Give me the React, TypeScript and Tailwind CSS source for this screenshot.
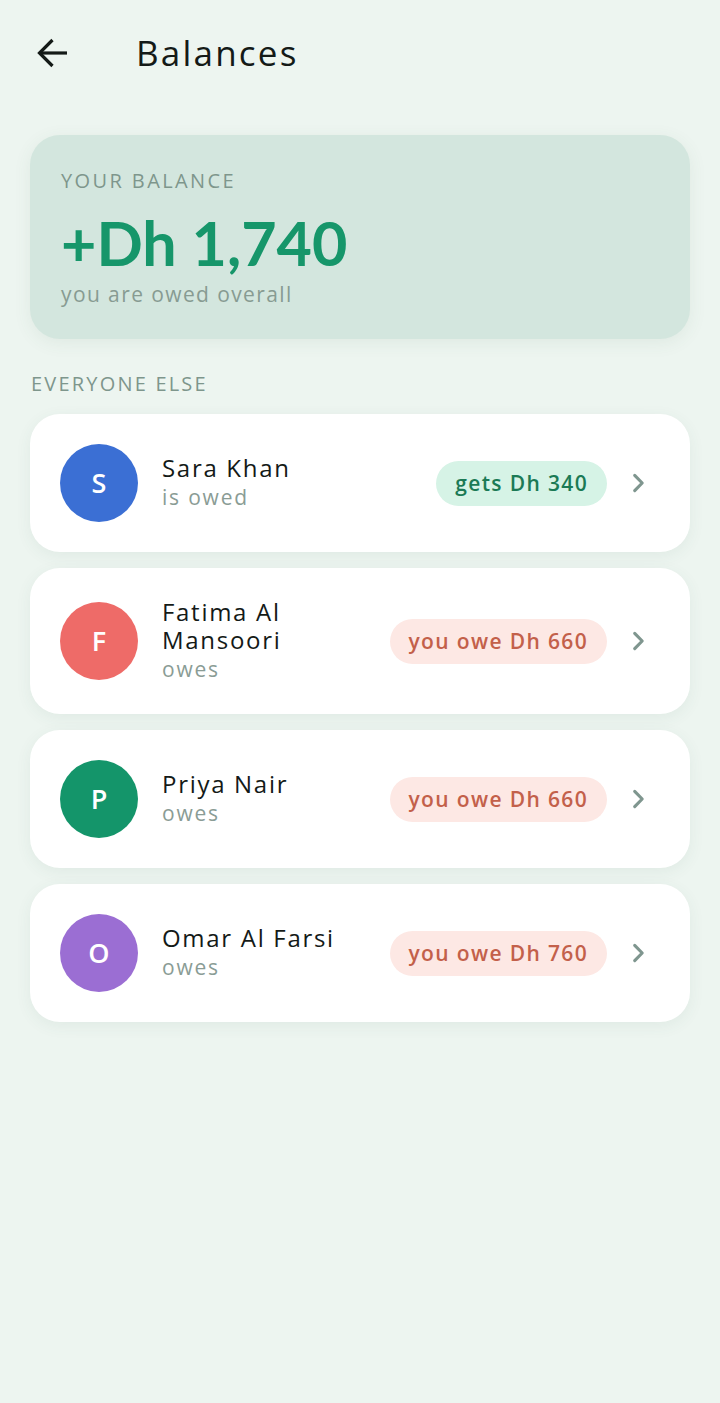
import React from "react";

type Person = {
  initial: string;
  name: string;
  sub: string;
  amount: string;
  color: string;
  positive: boolean;
};

const people: Person[] = [
  { initial: "S", name: "Sara Khan", sub: "is owed", amount: "gets Dh 340", color: "bg-[#3b6fd4]", positive: true },
  { initial: "F", name: "Fatima Al Mansoori", sub: "owes", amount: "you owe Dh 660", color: "bg-[#ee6b68]", positive: false },
  { initial: "P", name: "Priya Nair", sub: "owes", amount: "you owe Dh 660", color: "bg-[#14956a]", positive: false },
  { initial: "O", name: "Omar Al Farsi", sub: "owes", amount: "you owe Dh 760", color: "bg-[#9b6ed3]", positive: false },
];

function Chevron() {
  return (
    <svg width="24" height="24" viewBox="0 0 24 24" fill="none" stroke="#7f968f" strokeWidth="3.1" strokeLinecap="round" strokeLinejoin="round">
      <path d="M8.7 4.3L16.2 12L8.7 19.7" />
    </svg>
  );
}

export default function App() {
  return (
    <div className="min-h-[1403px] w-full bg-[#edf5f0] text-[#141a17]" style={{ fontFamily: "'Open Sans', 'Noto Sans', sans-serif" }}>
      <header className="flex h-[106px] items-center px-[36px]">
        <svg width="32" height="32" viewBox="0 0 32 32" fill="none" stroke="#141a17" strokeWidth="3.2" strokeLinecap="butt" strokeLinejoin="miter">
          <path d="M3.5 16H31" />
          <path d="M16.5 3L3.5 16l13 13" />
        </svg>
        <h1 className="ml-[68px] text-[35px] font-medium tracking-[2.2px]">Balances</h1>
      </header>

      <div className="px-[30px]">
        <section className="mt-[29px] rounded-[30px] bg-[#d3e6de] px-[31px] pt-[32px] pb-[31px] shadow-[0_4px_18px_rgba(60,100,80,0.08)]">
          <div className="text-[20px] font-medium uppercase leading-[28px] tracking-[2.4px] text-[#7e968c]">Your balance</div>
          <div className="mt-[12px] text-[61px] font-bold leading-[72px] text-[#16966a]" style={{ fontFamily: "Lato, 'Open Sans', sans-serif" }}>+Dh 1,740</div>
          <div className="mt-[1px] text-[21px] leading-[28px] tracking-[1.4px] text-[#879b92]">you are owed overall</div>
        </section>

        <div className="mt-[31px] mb-[16px] pl-[1px] text-[20px] font-medium uppercase leading-[28px] tracking-[2.2px] text-[#7e968c]">Everyone else</div>

        <div className="flex flex-col gap-[16px]">
          {people.map((p) => (
            <div key={p.name} className="flex items-center rounded-[30px] bg-white py-[30px] pl-[30px] pr-[40px] shadow-[0_4px_16px_rgba(60,100,80,0.07)]">
              <div className={`flex h-[78px] w-[78px] shrink-0 items-center justify-center rounded-full ${p.color} text-[27px] font-semibold text-white`}>
                {p.initial}
              </div>
              <div className="ml-[24px] min-w-0 max-w-[210px] flex-1">
                <div className="text-[24px] leading-[28px] tracking-[1.7px]">{p.name}</div>
                <div className="text-[21px] leading-[30px] tracking-[1.8px] text-[#8a9c95]">{p.sub}</div>
              </div>
              <div className="ml-auto flex items-center">
                <span
                  className={`rounded-full px-[19px] py-[9px] text-[21px] font-semibold leading-[27px] tracking-[1.35px] ${
                    p.positive ? "bg-[#d6f3e6] text-[#1b7a55]" : "bg-[#fde8e4] text-[#c3604a]"
                  }`}
                >
                  {p.amount}
                </span>
                <span className="ml-[19px]">
                  <Chevron />
                </span>
              </div>
            </div>
          ))}
        </div>
      </div>
    </div>
  );
}
